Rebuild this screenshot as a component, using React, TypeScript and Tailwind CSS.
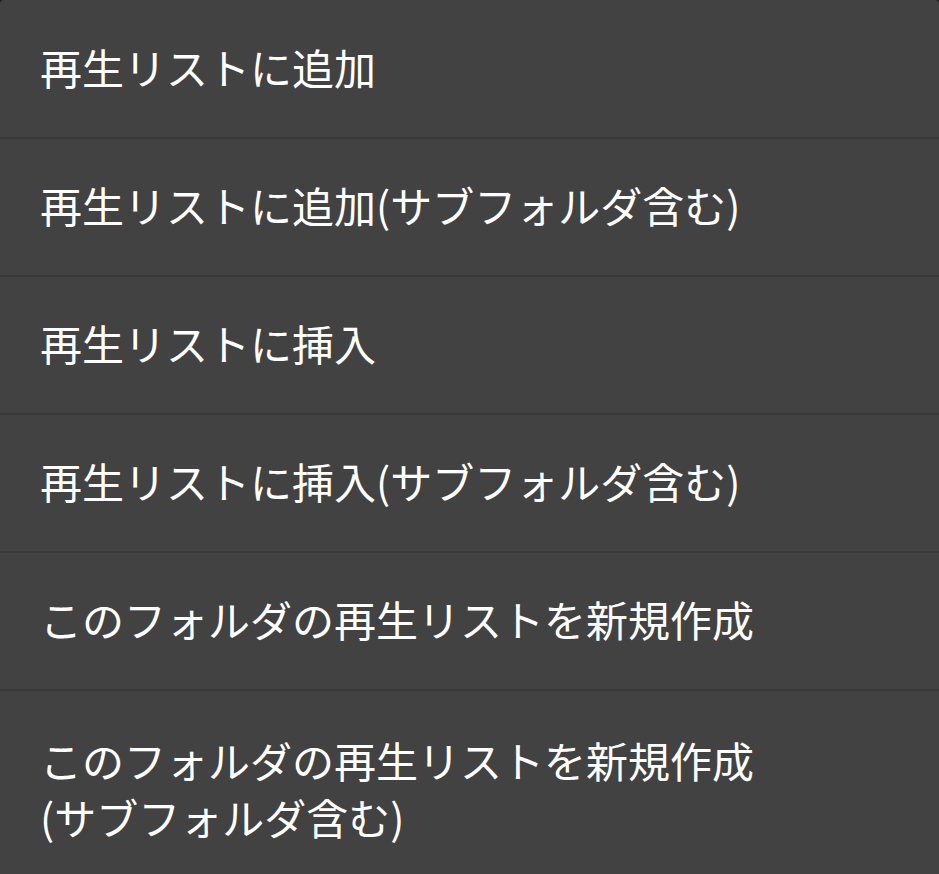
const items = [
  ["再生リストに追加"],
  ["再生リストに追加(サブフォルダ含む)"],
  ["再生リストに挿入"],
  ["再生リストに挿入(サブフォルダ含む)"],
  ["このフォルダの再生リストを新規作成"],
  ["このフォルダの再生リストを新規作成", "(サブフォルダ含む)"],
];

export default function App() {
  return (
    <div className="h-[874px] w-[939px] overflow-hidden bg-[#1c1c1c]">
      <div
        className="rounded-t-[4px] bg-[#424242] pt-px text-white"
        style={{ fontFamily: '"Noto Sans CJK JP", "Noto Sans", sans-serif' }}
      >
        {items.map((lines, i) => (
          <div
            key={i}
            className={
              lines.length > 1
                ? "border-b-2 border-[#393939] px-10 pt-[40px] pb-10 text-[42px] leading-[57px]"
                : "h-[138px] border-b-2 border-[#393939] px-10 pt-[37px] text-[42px] leading-[57px]"
            }
          >
            {lines.map((l) => (
              <div key={l}>{l}</div>
            ))}
          </div>
        ))}
      </div>
    </div>
  );
}
